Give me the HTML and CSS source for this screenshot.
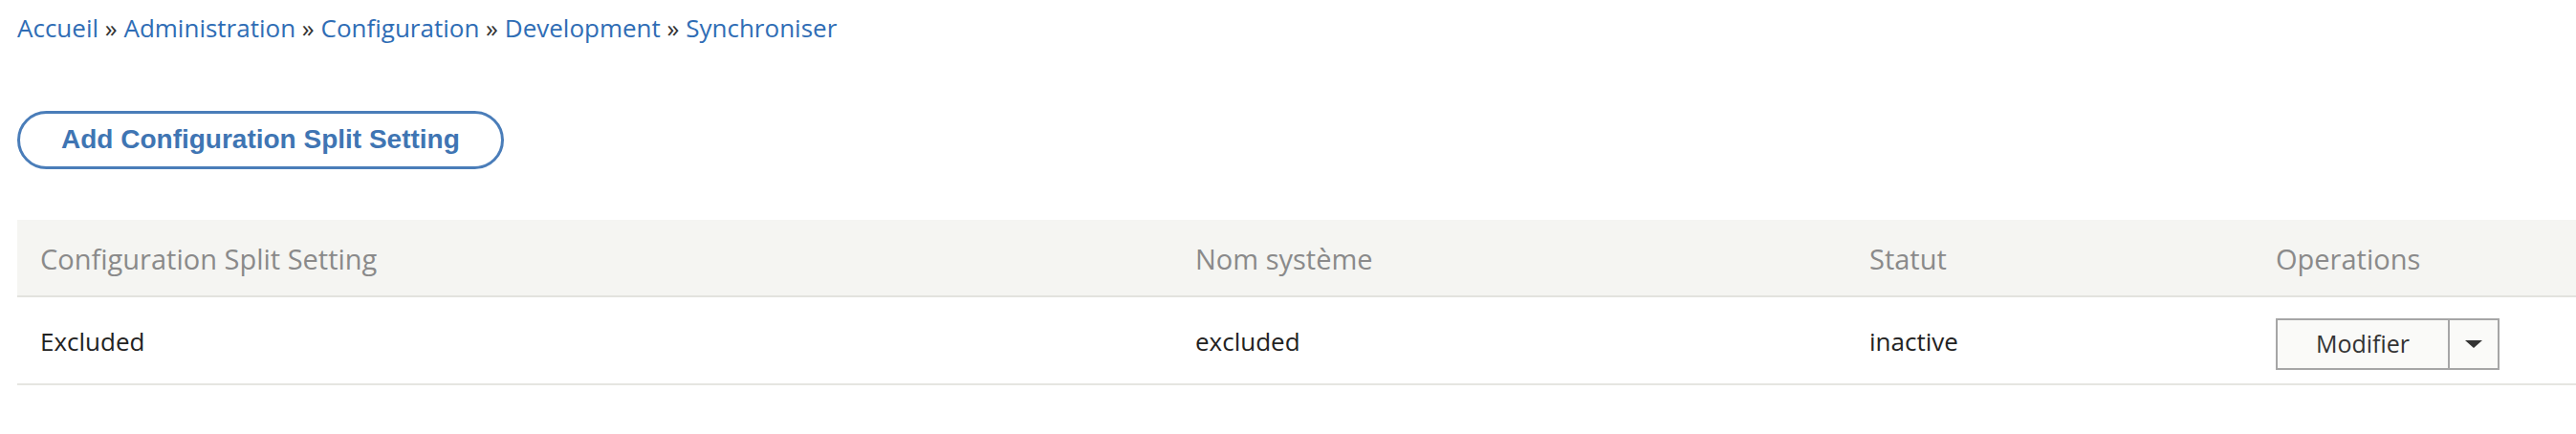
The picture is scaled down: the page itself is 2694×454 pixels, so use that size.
FILE: index.html
```html
<!DOCTYPE html>
<html lang="fr">
<head>
<meta charset="utf-8">
<title>Synchroniser</title>
<link rel="stylesheet" href="styles.css">
</head>
<body>
<div class="page">
  <nav class="breadcrumb">
    <a href="#">Accueil</a> <span class="sep">»</span> <a href="#">Administration</a> <span class="sep">»</span> <a href="#">Configuration</a> <span class="sep">»</span> <a href="#">Development</a> <span class="sep">»</span> <a href="#">Synchroniser</a>
  </nav>
  <div class="actions">
    <a class="button" href="#">Add Configuration Split Setting</a>
  </div>
  <table class="listing">
    <colgroup>
      <col class="c1"><col class="c2"><col class="c3"><col class="c4">
    </colgroup>
    <thead>
      <tr>
        <th>Configuration Split Setting</th>
        <th>Nom système</th>
        <th>Statut</th>
        <th>Operations</th>
      </tr>
    </thead>
    <tbody>
      <tr>
        <td>Excluded</td>
        <td>excluded</td>
        <td>inactive</td>
        <td class="ops">
          <div class="dropbutton">
            <a class="db-main" href="#">Modifier</a>
            <span class="db-toggle"><span class="tri"></span></span>
          </div>
        </td>
      </tr>
    </tbody>
  </table>
</div>
</body>
</html>
```

FILE: styles.css
```css
html, body {
  margin: 0;
  padding: 0;
  background: #ffffff;
}

.page {
  padding: 12px 0 0 18px;
  font-family: "Open Sans", "DejaVu Sans", sans-serif;
}

.breadcrumb {
  font-size: 26px;
  line-height: 34px;
  color: #333333;
  white-space: nowrap;
}

.breadcrumb a {
  color: #2f6db5;
  text-decoration: none;
}

.breadcrumb .sep {
  color: #333333;
}

.actions {
  padding-top: 70px;
}

.button {
  display: inline-block;
  border: 3px solid #4a7db9;
  border-radius: 40px;
  padding: 11px 43px 13px;
  font-family: "Liberation Sans", Arial, sans-serif;
  font-weight: bold;
  font-size: 28px;
  line-height: 31px;
  color: #3f75b3;
  text-decoration: none;
  white-space: nowrap;
}

.listing {
  margin-top: 53px;
  width: 100%;
  border-collapse: collapse;
  table-layout: fixed;
}

.listing col.c1 { width: 1208px; }
.listing col.c2 { width: 705px; }
.listing col.c3 { width: 425px; }

.listing th {
  background: #f5f5f2;
  color: #8a8a8a;
  font-weight: normal;
  font-size: 29px;
  line-height: 35px;
  text-align: left;
  padding: 23px 24px 21px;
  border-bottom: 2px solid #e3e3de;
  white-space: nowrap;
}

.listing td {
  height: 92px;
  box-sizing: border-box;
  vertical-align: top;
  padding: 29px 24px 0;
  font-size: 26px;
  line-height: 35px;
  color: #222222;
  border-bottom: 2px solid #e6e6e1;
  white-space: nowrap;
}

.listing td.ops {
  padding-top: 22px;
}

.dropbutton {
  display: inline-flex;
  height: 54px;
  box-sizing: border-box;
  border: 2px solid #a6a6a6;
  background: #fafaf8;
}

.db-main {
  width: 180px;
  box-sizing: border-box;
  display: flex;
  align-items: center;
  justify-content: center;
  font-size: 25px;
  color: #333333;
  text-decoration: none;
  border-right: 2px solid #a6a6a6;
  padding-bottom: 2px;
}

.db-toggle {
  width: 50px;
  display: flex;
  align-items: center;
  justify-content: center;
}

.tri {
  width: 0;
  height: 0;
  border-left: 9px solid transparent;
  border-right: 9px solid transparent;
  border-top: 8px solid #333333;
}
```
